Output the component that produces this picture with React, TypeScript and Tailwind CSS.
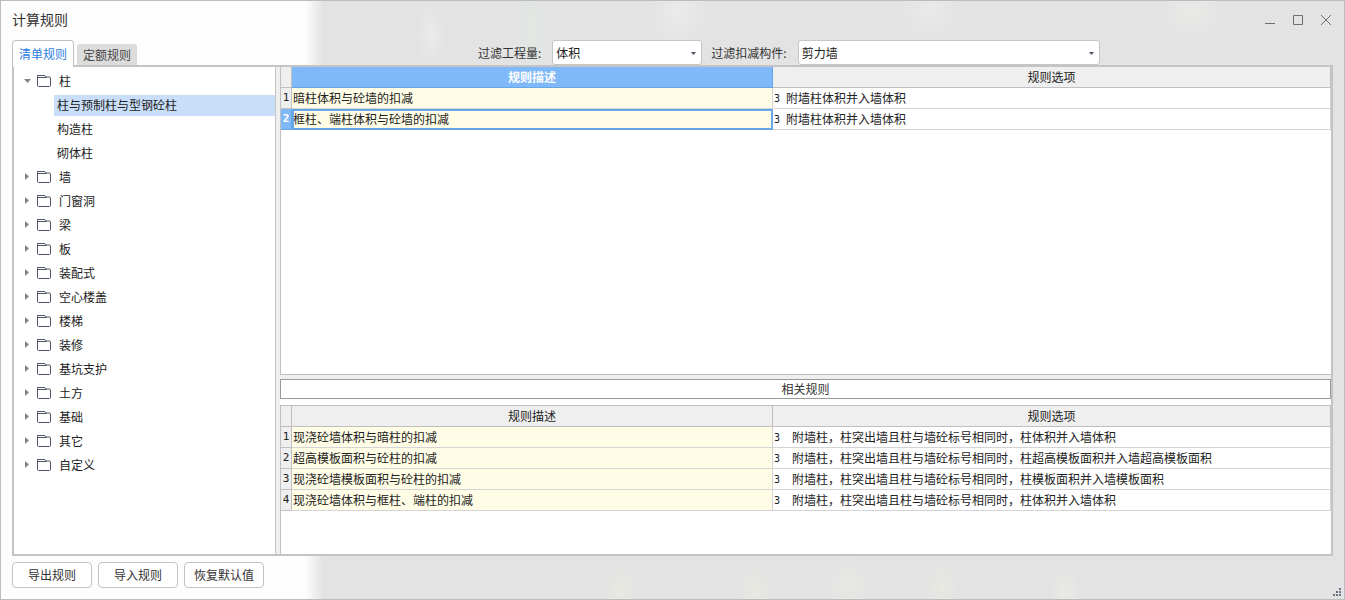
import React, { useState } from 'react';

interface Rule {
  desc: string;
  option: string;
}

const TREE = [
  { name: '柱', children: ['柱与预制柱与型钢砼柱', '构造柱', '砌体柱'] },
  { name: '墙' },
  { name: '门窗洞' },
  { name: '梁' },
  { name: '板' },
  { name: '装配式' },
  { name: '空心楼盖' },
  { name: '楼梯' },
  { name: '装修' },
  { name: '基坑支护' },
  { name: '土方' },
  { name: '基础' },
  { name: '其它' },
  { name: '自定义' },
];

const RULES: Rule[] = [
  { desc: '暗柱体积与砼墙的扣减', option: '附墙柱体积并入墙体积' },
  { desc: '框柱、端柱体积与砼墙的扣减', option: '附墙柱体积并入墙体积' },
];

const RELATED: Rule[] = [
  { desc: '现浇砼墙体积与暗柱的扣减', option: '附墙柱，柱突出墙且柱与墙砼标号相同时，柱体积并入墙体积' },
  { desc: '超高模板面积与砼柱的扣减', option: '附墙柱，柱突出墙且柱与墙砼标号相同时，柱超高模板面积并入墙超高模板面积' },
  { desc: '现浇砼墙模板面积与砼柱的扣减', option: '附墙柱，柱突出墙且柱与墙砼标号相同时，柱模板面积并入墙模板面积' },
  { desc: '现浇砼墙体积与框柱、端柱的扣减', option: '附墙柱，柱突出墙且柱与墙砼标号相同时，柱体积并入墙体积' },
];

const FolderIcon = () => (
  <svg width="14" height="12" viewBox="0 0 14 12" fill="none" stroke="#4d5366" className="shrink-0">
    <path d="M.5 10.5v-10h7.300l1.200 1.500H12.500a1 1 0 0 1 1 1v7.500a1 1 0 0 1-1 1h-11a1 1 0 0 1-1-1zM.5 2.500h9" />
  </svg>
);

const Arrow: React.FC<{ open?: boolean }> = ({ open }) => (
  <svg width="7" height="8" viewBox="0 0 7 8" fill="#858585" className="shrink-0">
    <path d={open ? 'M0 2h7L3.5 6z' : 'M1 0v7L5 3.5z'} />
  </svg>
);

const Select: React.FC<{ id: string; label: string; options: string[]; width: string }> = ({ id, label, options, width }) => (
  <>
    <label htmlFor={id} className="mr-[11px] whitespace-nowrap">{label}</label>
    <div className={`relative mr-[9px] ${width}`}>
      <select id={id} className="block h-[25px] w-full appearance-none rounded-[3px] border border-[#c6c6c8] bg-white pl-[3px] text-[#222] outline-none">
        {options.map((o) => <option key={o}>{o}</option>)}
      </select>
      <svg width="5" height="3" viewBox="0 0 5 3" fill="#4d5366" className="pointer-events-none absolute top-[12px] right-[6px]">
        <path d="M0 0h5L2.5 3z" />
      </svg>
    </div>
  </>
);

const RuleTable: React.FC<{ rows: Rule[]; active?: number; wide?: boolean; label: string }> = ({ rows, active, wide, label }) => (
  <table aria-label={label} className="w-full table-fixed border-separate border-spacing-0 text-[#222]">
    <colgroup>
      <col className="w-[11px]" />
      <col className="w-[481px]" />
      <col />
    </colgroup>
    <thead>
      <tr className="h-[21px] bg-[#efefef] leading-[20px]">
        <th className="border-r border-b border-[#c0c0c2] p-0" />
        <th className={`border-r border-b p-0 ${active !== undefined ? 'border-[#66a5e6] bg-[#7fb9fa] font-bold text-white' : 'border-[#c0c0c2] font-normal'}`}>规则描述</th>
        <th className="border-r border-b border-[#c0c0c2] p-0 font-normal">规则选项</th>
      </tr>
    </thead>
    <tbody>
      {rows.map((r, i) => {
        const on = i === active;
        return (
          <tr key={i}>
            <td className={`border-r border-b p-0 ${on ? 'border-[#66a5e6] bg-[#7fb9fa] font-bold text-white' : 'border-[#c0c0c2] bg-[#efefef]'}`}>
              <div className="flex h-5 items-center justify-center font-['DejaVu_Sans_Mono',monospace] text-[11px]">{i + 1}</div>
            </td>
            <td className={`border-r border-b border-[#d4d4d6] bg-[#fffde6] p-0 whitespace-nowrap ${on ? 'outline-2 -outline-offset-2 outline-[#66a5e6]' : ''}`}>
              <div className="flex h-5 items-center pl-px">{r.desc}</div>
            </td>
            <td className="border-r border-b border-[#d4d4d6] bg-white p-0 whitespace-nowrap">
              <div className="flex h-5 items-center pl-px">
                <span className={`shrink-0 font-['DejaVu_Sans_Mono',monospace] text-[10px] ${wide ? 'w-[18px]' : 'w-[12px]'}`}>3</span>
                {r.option}
              </div>
            </td>
          </tr>
        );
      })}
    </tbody>
  </table>
);

// frosted window backdrop, with faint light spots along the top and bottom edge
const BACKDROP = 'bg-[radial-gradient(14px_30px_at_430px_34px,#ebebeb,transparent),radial-gradient(16px_60px_at_530px_30px,#e1e8e2,transparent),radial-gradient(30px_34px_at_677px_12px,#ebebea,transparent),radial-gradient(30px_30px_at_930px_10px,#eaeae9,transparent),radial-gradient(30px_30px_at_1190px_10px,#eaeae8,transparent),radial-gradient(16px_26px_at_620px_590px,#e8e9e1,transparent),radial-gradient(16px_26px_at_753px_590px,#e8e9e1,transparent),radial-gradient(20px_30px_at_848px_585px,#e8e8e4,transparent),radial-gradient(16px_26px_at_942px_588px,#e8e9e1,transparent),radial-gradient(16px_26px_at_1064px_590px,#e9e9e5,transparent),linear-gradient(to_right,#fdfdfd_304px,#e3e3e3_322px)]';

export default function App() {
  const [tab, setTab] = useState(0);
  const [selected, setSelected] = useState('柱与预制柱与型钢砼柱');

  return (
    <div className={`relative flex min-h-screen flex-col border border-[#bcbcbe] px-[11px] pb-[11px] font-['Noto_Sans_CJK_SC',sans-serif] text-[12px] text-[#333] ${BACKDROP}`}>
      <header className="mb-[2px] flex h-[37px] items-center justify-between">
        <h1 className="text-[14px] text-[#333]">计算规则</h1>
        <div className="mr-px flex gap-4 text-[#6f6f6f]">
          <button aria-label="最小化"><svg width="12" height="12" viewBox="0 0 12 12" stroke="currentColor"><path d="M1 9.5h10" /></svg></button>
          <button aria-label="最大化"><svg width="12" height="12" viewBox="0 0 12 12" fill="none" stroke="currentColor"><path d="M1.5 1.5h9v9h-9z" /></svg></button>
          <button aria-label="关闭"><svg width="12" height="12" viewBox="0 0 12 12" stroke="currentColor"><path d="M1 1l10 10M11 1L1 11" /></svg></button>
        </div>
      </header>

      <div className="flex h-[25px] items-end">
        <div role="tablist" className="flex w-[466px] items-end gap-[3px]">
          {['清单规则', '定额规则'].map((t, i) => (
            <button
              key={t}
              role="tab"
              aria-selected={tab === i}
              onClick={() => setTab(i)}
              className={tab === i
                ? 'relative z-10 -mb-[2px] h-[27px] w-[62px] rounded-t-[4px] border border-b-0 border-[#c0c0c2] bg-white text-[#2a7de1]'
                : 'h-[21px] w-[60px] rounded-t-[3px] bg-[#dcdcdc] text-[#444]'}
            >
              {t}
            </button>
          ))}
        </div>
        <div className="flex items-center">
          <Select id="quantity" label="过滤工程量:" options={['体积']} width="w-[150px]" />
          <Select id="member" label="过滤扣减构件:" options={['剪力墙']} width="w-[302px]" />
        </div>
      </div>

      <main className="flex flex-1 border-2 border-[#c4c4c6] bg-[#efefef]">
        <nav className="w-[262px] shrink-0 border-r border-[#c4c4c6] bg-white pt-[2px] text-[#222]">
          <ul>
            {TREE.map((n) => (
              <li key={n.name}>
                <button className="flex h-6 w-full items-center pl-[10px]">
                  <Arrow open={!!n.children} />
                  <span className="ml-[6px]"><FolderIcon /></span>
                  <span className="ml-[8px]">{n.name}</span>
                </button>
                {n.children && (
                  <ul className="pl-[40px]">
                    {n.children.map((c) => (
                      <li key={c} className="flex h-6 items-center">
                        <button onClick={() => setSelected(c)} className={`h-[21px] w-full pl-[3px] text-left ${selected === c ? 'bg-[#c9dff9]' : ''}`}>{c}</button>
                      </li>
                    ))}
                  </ul>
                )}
              </li>
            ))}
          </ul>
        </nav>

        <section className="ml-[4px] flex min-w-0 flex-1 flex-col">
          <div className="flex-1 border-b border-l border-[#c0c0c2] bg-white">
            <RuleTable label="计算规则" rows={RULES} active={1} />
          </div>
          <h2 className="mt-[4px] h-[20px] border border-[#999] bg-white text-center leading-[18px]">相关规则</h2>
          <div className="bg-white pt-[6px]">
            <div className="min-h-[149px] border-t border-l border-[#c0c0c2]">
              <RuleTable label="相关规则" rows={RELATED} wide />
            </div>
          </div>
        </section>
      </main>

      <footer className="mt-[6px] flex gap-[6px]">
        {['导出规则', '导入规则', '恢复默认值'].map((b) => (
          <button key={b} className="h-[26px] w-[80px] rounded-[4px] border border-[#c4c4c6] bg-white">{b}</button>
        ))}
      </footer>

      <svg width="8" height="8" viewBox="0 0 8 8" fill="#6b7480" className="absolute right-[3px] bottom-[3px]">
        <path d="M6 0h2v2h-2zM3 3h2v2h-2zM6 3h2v2h-2zM0 6h2v2h-2zM3 6h2v2h-2zM6 6h2v2h-2z" />
      </svg>
    </div>
  );
}
